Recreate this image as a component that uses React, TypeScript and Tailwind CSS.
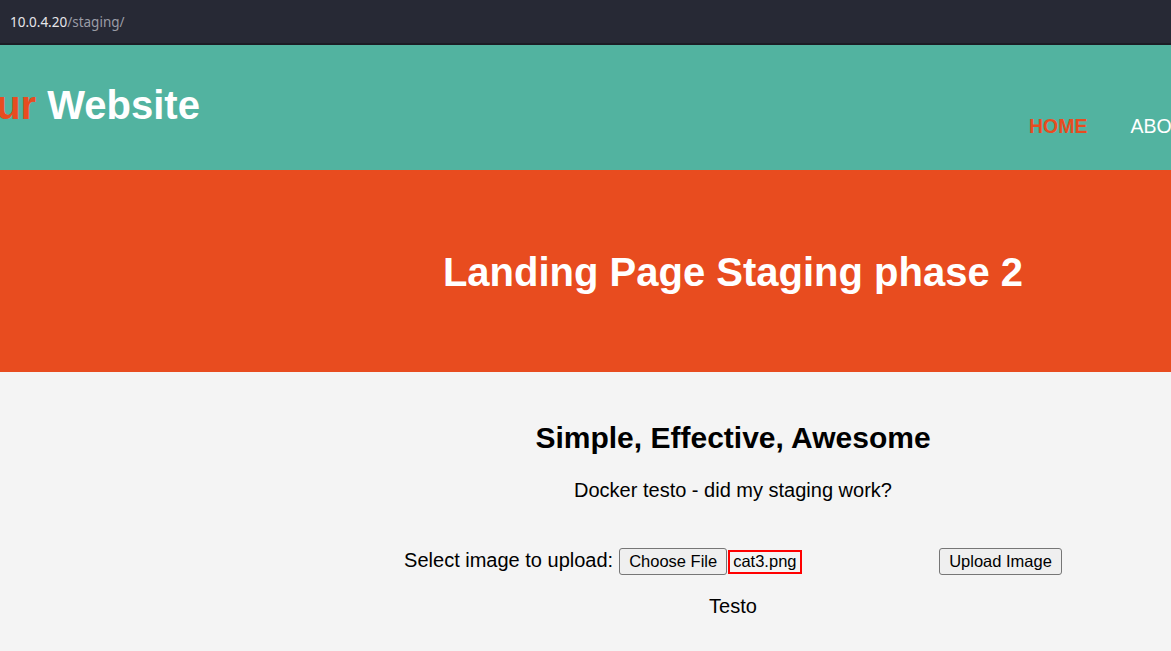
const App = () => {
    return (
        <div className="w-[1171px] h-[651px] overflow-hidden bg-[#f4f4f4] font-['Liberation_Sans',Arial,sans-serif]">
            {/* browser url bar */}
            <div className="h-[45px] bg-[#272935] border-b-2 border-[#1c1d25] flex items-center pl-[10px] pt-px text-[13.5px] font-['Noto_Sans',sans-serif]">
                <span className="text-[#e6e6ea]">10.0.4.20</span>
                <span className="text-[#9a9ca6]">/staging/</span>
            </div>

            <div className="w-[1466px]">
                <header className="h-[125px] bg-[#52b3a0] flex items-start">
                    <h1 className="w-[1081px] shrink-0 ml-[-52px] mt-[37px] text-[40px] font-bold leading-[46px] text-white whitespace-nowrap">
                        <span className="text-[#e84c1f]">Your</span> Website
                    </h1>
                    <nav className="flex gap-[43px] mt-[70px] text-[19.5px] uppercase leading-[22px] whitespace-nowrap">
                        <span className="text-[#e84c1f] font-bold">Home</span>
                        <span className="text-white">About</span>
                        <span className="text-white">Services</span>
                    </nav>
                </header>

                <section className="h-[202px] bg-[#e84c1f] flex items-center justify-center">
                    <h2 className="text-[40px] font-bold text-white leading-[46px] mt-[1px]">
                        Landing Page Staging phase 2
                    </h2>
                </section>

                <section className="flex flex-col items-center text-black">
                    <h3 className="mt-[49px] text-[30px] font-bold leading-[34px]">
                        Simple, Effective, Awesome
                    </h3>
                    <p className="mt-[23px] text-[20px] leading-[24px]">
                        Docker testo - did my staging work?
                    </p>

                    <form className="mt-[46px] flex items-center text-[20px]">
                        <span className="mr-[6px] leading-[24px] mt-[-4px]">Select image to upload:</span>
                        <div className="w-[320px] flex items-center">
                            <span className="h-[27px] px-[9px] flex items-center bg-[#efefef] border border-[#767676] rounded-[3px] text-[16.5px]">
                                Choose File
                            </span>
                            <span className="ml-px h-[24px] px-[3px] flex items-center border-2 border-[#ff0000] text-[16.5px]">
                                cat3.png
                            </span>
                        </div>
                        <span className="h-[27px] px-[9px] flex items-center bg-[#efefef] border border-[#767676] rounded-[3px] text-[16.5px]">
                            Upload Image
                        </span>
                    </form>

                    <p className="mt-[19px] text-[20px] leading-[24px]">Testo</p>
                </section>
            </div>
        </div>
    );
};

export default App;
